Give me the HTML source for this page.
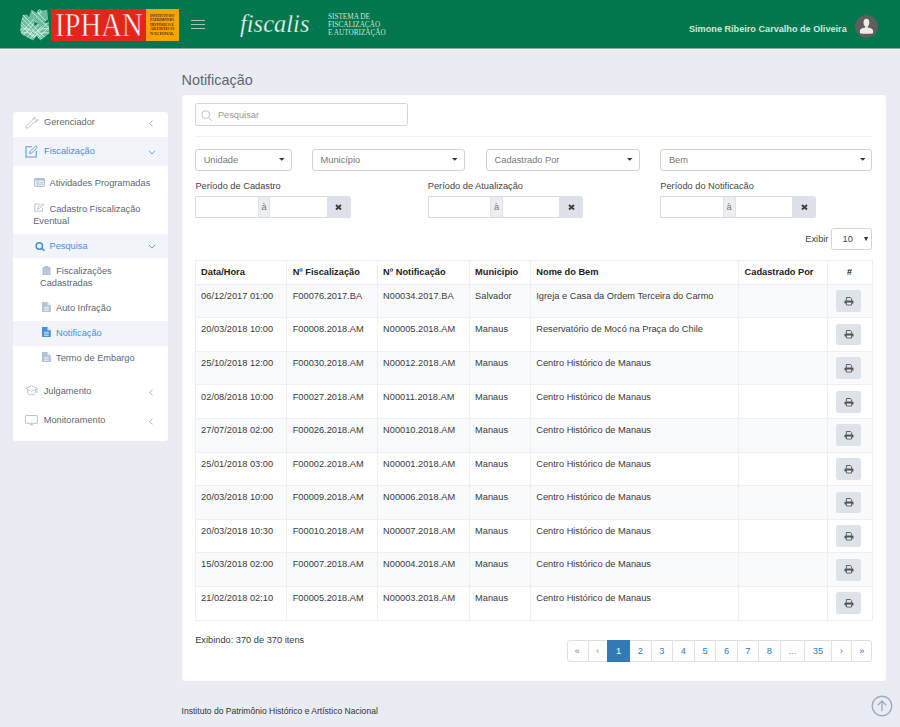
<!DOCTYPE html>
<html><head><meta charset="utf-8"><style>
*{margin:0;padding:0;box-sizing:border-box}
html,body{width:900px;height:727px;overflow:hidden;background:#e9ecf3;font-family:"Liberation Sans",sans-serif;font-size:9.25px;color:#3a3a3a}
.t{position:absolute;white-space:nowrap;line-height:12px}
.b{position:absolute}
.hdr{position:absolute;left:0;top:0;width:900px;height:48px;background:#02764c}
.sb{color:#5c6873}
.sba{color:#4c8fd6}
.th{font-weight:bold;color:#222}
.ph{color:#999}
.pg{color:#337ab7;text-align:center}
</style></head><body>
<div class="hdr"></div>
<div class="b" style="left:0.00px;top:48.00px;width:900.00px;height:1.00px;background:#7fb39c"></div>
<div class="b" style="left:0.00px;top:49.00px;width:900.00px;height:1.00px;background:#f1f2f8"></div>
<div class="b" style="left:50.70px;top:8.50px;width:94.90px;height:32.10px;background:#e3261b"></div>
<div class="b" style="left:145.60px;top:8.50px;width:33.00px;height:32.10px;background:#f7a400"></div>
<div class="t" style="left:55px;top:7px;font-family:'Liberation Serif',serif;font-size:33px;line-height:36px;color:#fff;-webkit-text-stroke:0.55px #e3261b;transform:scaleX(0.87);transform-origin:0 0">IPHAN</div>
<div class="t" style="left:150px;top:12.60px;font-family:'Liberation Serif',serif;font-size:4.3px;line-height:5px;color:#4a3008;font-weight:bold;letter-spacing:-0.05px;transform:scaleX(0.78);transform-origin:0 0">INSTITUTO DO</div>
<div class="t" style="left:150px;top:17.10px;font-family:'Liberation Serif',serif;font-size:4.3px;line-height:5px;color:#4a3008;font-weight:bold;letter-spacing:-0.05px;transform:scaleX(0.86);transform-origin:0 0">PATRIMÔNIO</div>
<div class="t" style="left:150px;top:21.60px;font-family:'Liberation Serif',serif;font-size:4.3px;line-height:5px;color:#4a3008;font-weight:bold;letter-spacing:-0.05px;transform:scaleX(0.85);transform-origin:0 0">HISTÓRICO E</div>
<div class="t" style="left:150px;top:26.10px;font-family:'Liberation Serif',serif;font-size:4.3px;line-height:5px;color:#4a3008;font-weight:bold;letter-spacing:-0.05px;transform:scaleX(1.02);transform-origin:0 0">ARTÍSTICO</div>
<div class="t" style="left:150px;top:30.60px;font-family:'Liberation Serif',serif;font-size:4.3px;line-height:5px;color:#4a3008;font-weight:bold;letter-spacing:-0.05px;transform:scaleX(1.04);transform-origin:0 0">NACIONAL</div>
<svg class="b" style="left:20px;top:9px" width="31" height="33" viewBox="0 0 31 33">
<defs><clipPath id="em"><path d="M11.5 0.5 L17 4 L19 2 L27.2 0.8 L29.5 24 L26 27 L20.3 31.6 L16.3 26.7 L13 31.5 L2 25.5 L0.2 22 L1 13 L3 6 L7 5.5 L9 8 Z"/></clipPath></defs>
<g clip-path="url(#em)">
<rect x="0" y="0" width="31" height="33" fill="#8fd3bb" opacity="0.75"/>
<g stroke="#e2f8ef" stroke-width="0.75" fill="none">
<path d="M-2 10 L20 33 M-2 13 L18 33 M0 7 L24 32 M2 5 L27 31"/>
<path d="M0 30 L16 12 M-2 27 L14 10 M3 33 L19 15 M7 33 L22 17"/>
<path d="M14 28 L31 10 M17 30 L31 16 M12 3 L31 21 M15 1 L31 17"/>
<path d="M-1 21 Q8 17 15 24 Q22 17 31 21"/>
<path d="M-1 25 Q8 21 15 28 Q22 21 31 25"/>
</g>
</g>
<circle cx="19.5" cy="2.6" r="1.7" fill="none" stroke="#e6fbf3" stroke-width="0.8"/>
<path d="M14.3 12.8 L17.8 14.8 L14.3 16.8 Z" fill="#02764c"/>
<path d="M23.7 13.3 L28.2 10.4 L28.2 13.8 Z" fill="#02764c"/>
</svg>
<div class="b" style="left:191.00px;top:19.60px;width:13.50px;height:1.10px;background:#9fc8b5"></div>
<div class="b" style="left:191.00px;top:23.90px;width:13.50px;height:1.10px;background:#9fc8b5"></div>
<div class="b" style="left:191.00px;top:28.10px;width:13.50px;height:1.10px;background:#9fc8b5"></div>
<div class="t" style="left:240px;top:8px;font-family:'Liberation Serif',serif;font-style:italic;font-size:24.5px;line-height:32px;color:#eef3ef;-webkit-text-stroke:0.25px #02764c">fiscalis</div>
<div class="t" style="left:328px;top:11.80px;font-family:'Liberation Serif',serif;font-size:7.6px;line-height:9px;color:#cfe2d8;transform:scaleX(0.95);transform-origin:0 0">SISTEMA DE</div>
<div class="t" style="left:328px;top:20.00px;font-family:'Liberation Serif',serif;font-size:7.6px;line-height:9px;color:#cfe2d8;transform:scaleX(0.95);transform-origin:0 0">FISCALIZAÇÃO</div>
<div class="t" style="left:328px;top:28.20px;font-family:'Liberation Serif',serif;font-size:7.6px;line-height:9px;color:#cfe2d8;transform:scaleX(0.95);transform-origin:0 0">E AUTORIZAÇÃO</div>
<div class="t" style="left:689px;top:22.94px;font-weight:bold;color:#d2e6dc;font-size:9.15px">Simone Ribeiro Carvalho de Oliveira</div>
<svg class="b" style="left:855px;top:15.2px" width="23" height="23" viewBox="0 0 23 23">
<circle cx="11.5" cy="11.5" r="11.4" fill="#5e5e5e"/>
<ellipse cx="11.4" cy="7.6" rx="2.9" ry="3.9" fill="#eeebe7"/><path d="M10.2 10.5 L10.2 12.4 C7.5 12.9 5 13.6 4.9 16 L5 18.2 C8 18.9 15 18.9 18 18.2 L18.1 16 C18 13.6 15.5 12.9 12.8 12.4 L12.8 10.5 Z" fill="#eeebe7"/>
</svg>
<div class="t" style="left:181.5px;top:71.54px;font-size:14.4px;line-height:17px;color:#5d6873">Notificação</div>
<div class="b" style="left:13.00px;top:112.00px;width:155.00px;height:328.50px;background:#fff;border-radius:3px"></div>
<div class="b" style="left:13.00px;top:137.00px;width:155.00px;height:29.00px;background:#f1f5fa"></div>
<div class="b" style="left:13.00px;top:233.60px;width:155.00px;height:24.00px;background:#f1f5fa"></div>
<div class="b" style="left:13.00px;top:321.00px;width:155.00px;height:25.00px;background:#f1f5fa"></div>
<div class="t sb" style="left:44.00px;top:116.34px;">Gerenciador</div>
<div class="t sba" style="left:44.00px;top:145.44px;">Fiscalização</div>
<div class="t sb" style="left:49.50px;top:176.94px;">Atividades Programadas</div>
<div class="t sb" style="left:49.50px;top:202.64px;">Cadastro Fiscalização</div>
<div class="t sb" style="left:33.20px;top:214.74px;">Eventual</div>
<div class="t sba" style="left:49.50px;top:239.94px;">Pesquisa</div>
<div class="t sb" style="left:56.20px;top:264.84px;">Fiscalizações</div>
<div class="t sb" style="left:40.00px;top:276.94px;">Cadastradas</div>
<div class="t sb" style="left:56.00px;top:302.24px;">Auto Infração</div>
<div class="t sba" style="left:56.00px;top:327.44px;">Notificação</div>
<div class="t sb" style="left:56.00px;top:352.44px;">Termo de Embargo</div>
<div class="t sb" style="left:43.70px;top:384.84px;">Julgamento</div>
<div class="t sb" style="left:43.70px;top:414.24px;">Monitoramento</div>
<svg class="b" style="left:147.5px;top:120px" width="6" height="7" viewBox="0 0 6 7"><path d="M4.5 0.8 L1.5 3.5 L4.5 6.2" stroke="#aab4be" stroke-width="1" fill="none"/></svg>
<svg class="b" style="left:147.5px;top:150px" width="8" height="5" viewBox="0 0 8 5"><path d="M0.8 0.8 L4 4 L7.2 0.8" stroke="#6a9fd8" stroke-width="1" fill="none"/></svg>
<svg class="b" style="left:147.5px;top:243.5px" width="8" height="5" viewBox="0 0 8 5"><path d="M0.8 0.8 L4 4 L7.2 0.8" stroke="#6a9fd8" stroke-width="1" fill="none"/></svg>
<svg class="b" style="left:147.5px;top:388.5px" width="6" height="7" viewBox="0 0 6 7"><path d="M4.5 0.8 L1.5 3.5 L4.5 6.2" stroke="#aab4be" stroke-width="1" fill="none"/></svg>
<svg class="b" style="left:147.5px;top:417.5px" width="6" height="7" viewBox="0 0 6 7"><path d="M4.5 0.8 L1.5 3.5 L4.5 6.2" stroke="#aab4be" stroke-width="1" fill="none"/></svg>
<svg class="b" style="left:24.5px;top:117px" width="14" height="12" viewBox="0 0 14 12"><path d="M1.2 9.1 L7.5 3.2 A2.9 2.9 0 0 1 10.3 0.4 L9.6 2.3 L11.3 3.6 L13.1 2.4 A2.9 2.9 0 0 1 9.3 5 L3 10.9 A1.25 1.25 0 0 1 1.2 9.1 Z" stroke="#b0c2d3" stroke-width="0.9" fill="none" stroke-linejoin="round"/></svg>
<svg class="b" style="left:24.5px;top:144.5px" width="13" height="13" viewBox="0 0 13 13"><path d="M7 1.7 L1 1.7 L1 12 L11.3 12 L11.3 6" stroke="#5a9ad9" stroke-width="1.05" fill="none"/><path d="M4.6 8.4 L5.1 6.4 L10.8 0.7 L12.4 2.3 L6.6 8 Z" stroke="#5a9ad9" stroke-width="0.95" fill="none"/></svg>
<svg class="b" style="left:34px;top:177.5px" width="11" height="9" viewBox="0 0 11 9"><rect x="0.5" y="0.5" width="10" height="8" rx="0.8" fill="#e6edf3" stroke="#b0c2d3" stroke-width="1"/><rect x="0.5" y="0.5" width="10" height="2" fill="#b0c2d3"/><path d="M3.3 3 V7.5 M3.8 4.6 H9.5 M3.8 6.3 H9.5" stroke="#b0c2d3" stroke-width="0.7"/></svg>
<svg class="b" style="left:34px;top:203px" width="11" height="9" viewBox="0 0 11 9"><path d="M6 1 L0.8 1 L0.8 8.2 L8.5 8.2 L8.5 5" stroke="#b0c2d3" stroke-width="0.9" fill="none"/><path d="M3.5 6 L4 4.3 L8.8 0.5 L10 1.7 L5.3 5.5 Z" stroke="#b0c2d3" stroke-width="0.9" fill="none"/></svg>
<svg class="b" style="left:34.5px;top:241.5px" width="11" height="9" viewBox="0 0 11 9"><circle cx="4.3" cy="4" r="3.2" stroke="#4a8fd6" stroke-width="1.5" fill="none"/><path d="M6.6 6.3 L9.5 8.8" stroke="#4a8fd6" stroke-width="1.7"/></svg>
<svg class="b" style="left:42px;top:265.5px" width="9" height="9" viewBox="0 0 9 9"><rect x="0.5" y="1.2" width="8" height="7.8" fill="#b0c2d3"/><rect x="2.5" y="0" width="4" height="2" fill="#b0c2d3"/><path d="M3 3 V8 M6 3 V8" stroke="#dfe6ed" stroke-width="0.6"/></svg>
<svg class="b" style="left:41.7px;top:302.4px" width="9" height="10" viewBox="0 0 9 10"><path d="M0 0 H5.5 L8.8 3.3 V10 H0 Z" fill="#b0c2d3"/><path d="M5.5 0 V3.3 H8.8" fill="#e9eef3"/><path d="M2 5.2 H6.8 M2 6.8 H6.8 M2 8.4 H6.8" stroke="#fff" stroke-width="0.7"/></svg>
<svg class="b" style="left:41.7px;top:327.3px" width="9" height="10" viewBox="0 0 9 10"><path d="M0 0 H5.5 L8.8 3.3 V10 H0 Z" fill="#4a8fd6"/><path d="M5.5 0 V3.3 H8.8" fill="#e9eef3"/><path d="M2 5.2 H6.8 M2 6.8 H6.8 M2 8.4 H6.8" stroke="#fff" stroke-width="0.7"/></svg>
<svg class="b" style="left:41.7px;top:352.3px" width="9" height="10" viewBox="0 0 9 10"><path d="M0 0 H5.5 L8.8 3.3 V10 H0 Z" fill="#b0c2d3"/><path d="M5.5 0 V3.3 H8.8" fill="#e9eef3"/><path d="M2 5.2 H6.8 M2 6.8 H6.8 M2 8.4 H6.8" stroke="#fff" stroke-width="0.7"/></svg>
<svg class="b" style="left:24.5px;top:384.5px" width="14" height="11" viewBox="0 0 14 11"><path d="M6.5 0.6 L12.6 3.4 L6.5 6.2 L0.4 3.4 Z" stroke="#b0c2d3" stroke-width="0.9" fill="none" stroke-linejoin="round"/><path d="M2.6 4.5 V8.3 C4 10.3 9 10.3 10.4 8.3 V4.5" stroke="#b0c2d3" stroke-width="0.9" fill="none"/><path d="M12 3.8 V8" stroke="#b0c2d3" stroke-width="0.9"/></svg>
<svg class="b" style="left:24.8px;top:414.5px" width="14" height="11" viewBox="0 0 14 11"><rect x="0.5" y="0.5" width="12" height="7.8" rx="0.6" stroke="#b0c2d3" stroke-width="0.95" fill="none"/><path d="M4.8 9.8 H8.2 M6.5 8.3 V9.8" stroke="#b0c2d3" stroke-width="0.9"/></svg>
<div class="b" style="left:182.00px;top:95.00px;width:704.00px;height:586.00px;background:#fff;border-radius:3px"></div>
<div class="b" style="left:195.20px;top:103.20px;width:212.80px;height:22.60px;border:1px solid #cfd6e1;border-radius:2.5px;background:#fff"></div>
<svg class="b" style="left:201px;top:109.5px" width="12" height="12" viewBox="0 0 12 12"><circle cx="4.7" cy="4.7" r="3.9" stroke="#b5b9c2" stroke-width="0.9" fill="none"/><path d="M7.6 7.6 L10.8 10.8" stroke="#b5b9c2" stroke-width="1"/></svg>
<div class="t ph" style="left:217.90px;top:108.94px;">Pesquisar</div>
<div class="b" style="left:195.00px;top:135.50px;width:677.50px;height:1.00px;background:#eff1f5"></div>
<div class="b" style="left:195.10px;top:148.50px;width:96.80px;height:22.10px;border:1px solid #d2d2d2;border-radius:3px;background:#fff"></div>
<div class="t " style="left:203.70px;top:153.94px;color:#777">Unidade</div>
<svg class="b" style="left:278.9px;top:158px" width="6" height="3" viewBox="0 0 6 3"><path d="M0 0 H5.5 L2.75 2.8Z" fill="#333"/></svg>
<div class="b" style="left:312.00px;top:148.50px;width:153.30px;height:22.10px;border:1px solid #d2d2d2;border-radius:3px;background:#fff"></div>
<div class="t " style="left:320.60px;top:153.94px;color:#777">Município</div>
<svg class="b" style="left:452.3px;top:158px" width="6" height="3" viewBox="0 0 6 3"><path d="M0 0 H5.5 L2.75 2.8Z" fill="#333"/></svg>
<div class="b" style="left:486.00px;top:148.50px;width:154.00px;height:22.10px;border:1px solid #d2d2d2;border-radius:3px;background:#fff"></div>
<div class="t " style="left:494.60px;top:153.94px;color:#777">Cadastrado Por</div>
<svg class="b" style="left:627px;top:158px" width="6" height="3" viewBox="0 0 6 3"><path d="M0 0 H5.5 L2.75 2.8Z" fill="#333"/></svg>
<div class="b" style="left:660.30px;top:148.50px;width:212.20px;height:22.10px;border:1px solid #d2d2d2;border-radius:3px;background:#fff"></div>
<div class="t " style="left:668.90px;top:153.94px;color:#777">Bem</div>
<svg class="b" style="left:859.5px;top:158px" width="6" height="3" viewBox="0 0 6 3"><path d="M0 0 H5.5 L2.75 2.8Z" fill="#333"/></svg>
<div class="t " style="left:195.40px;top:179.94px;color:#444">Período de Cadastro</div>
<div class="t " style="left:427.80px;top:179.94px;color:#444">Período de Atualização</div>
<div class="t " style="left:660.30px;top:179.94px;color:#444">Período do Notificacão</div>
<div class="b" style="left:195.10px;top:195.50px;width:132.20px;height:22.30px;border:1px solid #d3dae4;border-right:none;background:#fff;border-radius:2px 0 0 2px"></div>
<div class="b" style="left:257.70px;top:195.50px;width:12.80px;height:22.30px;border:1px solid #d3dae4;border-left:1px solid #dfe3ea;border-right:1px solid #dfe3ea;background:#eceef1"></div>
<div class="t" style="left:257.70px;width:12.8px;text-align:center;top:201.14px;color:#777">à</div>
<div class="b" style="left:327.00px;top:195.50px;width:23.80px;height:22.30px;background:#dde2ea;border-radius:0 2.5px 2.5px 0"></div>
<svg class="b" style="left:335.40px;top:204px" width="7" height="6.5" viewBox="0 0 7 6.5"><path d="M1 1 L6 5.5 M6 1 L1 5.5" stroke="#3d3d3d" stroke-width="1.9"/></svg>
<div class="b" style="left:427.50px;top:195.50px;width:132.20px;height:22.30px;border:1px solid #d3dae4;border-right:none;background:#fff;border-radius:2px 0 0 2px"></div>
<div class="b" style="left:490.10px;top:195.50px;width:12.80px;height:22.30px;border:1px solid #d3dae4;border-left:1px solid #dfe3ea;border-right:1px solid #dfe3ea;background:#eceef1"></div>
<div class="t" style="left:490.10px;width:12.8px;text-align:center;top:201.14px;color:#777">à</div>
<div class="b" style="left:559.40px;top:195.50px;width:23.80px;height:22.30px;background:#dde2ea;border-radius:0 2.5px 2.5px 0"></div>
<svg class="b" style="left:567.80px;top:204px" width="7" height="6.5" viewBox="0 0 7 6.5"><path d="M1 1 L6 5.5 M6 1 L1 5.5" stroke="#3d3d3d" stroke-width="1.9"/></svg>
<div class="b" style="left:660.20px;top:195.50px;width:132.20px;height:22.30px;border:1px solid #d3dae4;border-right:none;background:#fff;border-radius:2px 0 0 2px"></div>
<div class="b" style="left:722.80px;top:195.50px;width:12.80px;height:22.30px;border:1px solid #d3dae4;border-left:1px solid #dfe3ea;border-right:1px solid #dfe3ea;background:#eceef1"></div>
<div class="t" style="left:722.80px;width:12.8px;text-align:center;top:201.14px;color:#777">à</div>
<div class="b" style="left:792.10px;top:195.50px;width:23.80px;height:22.30px;background:#dde2ea;border-radius:0 2.5px 2.5px 0"></div>
<svg class="b" style="left:800.50px;top:204px" width="7" height="6.5" viewBox="0 0 7 6.5"><path d="M1 1 L6 5.5 M6 1 L1 5.5" stroke="#3d3d3d" stroke-width="1.9"/></svg>
<div class="t " style="left:805.30px;top:232.84px;color:#444">Exibir</div>
<div class="b" style="left:831.30px;top:228.20px;width:41.20px;height:21.40px;border:1px solid #cfd6e1;border-radius:2.5px;background:#fff"></div>
<div class="t " style="left:842.60px;top:232.84px;color:#444">10</div>
<svg class="b" style="left:864.4px;top:236.6px" width="4.5" height="4.5" viewBox="0 0 4.5 4.5"><path d="M0 0 H4.2 L2.1 4.2Z" fill="#333"/></svg>
<div class="b" style="left:195.20px;top:284.20px;width:677.40px;height:33.58px;background:#f9fafc"></div>
<div class="b" style="left:195.20px;top:351.36px;width:677.40px;height:33.58px;background:#f9fafc"></div>
<div class="b" style="left:195.20px;top:418.52px;width:677.40px;height:33.58px;background:#f9fafc"></div>
<div class="b" style="left:195.20px;top:485.68px;width:677.40px;height:33.58px;background:#f9fafc"></div>
<div class="b" style="left:195.20px;top:552.84px;width:677.40px;height:33.58px;background:#f9fafc"></div>
<div class="b" style="left:195.20px;top:260.00px;width:677.40px;height:1.00px;background:#eceff3"></div>
<div class="b" style="left:195.20px;top:283.70px;width:677.40px;height:1.00px;background:#eceff3"></div>
<div class="b" style="left:195.20px;top:317.28px;width:677.40px;height:1.00px;background:#eceff3"></div>
<div class="b" style="left:195.20px;top:350.86px;width:677.40px;height:1.00px;background:#eceff3"></div>
<div class="b" style="left:195.20px;top:384.44px;width:677.40px;height:1.00px;background:#eceff3"></div>
<div class="b" style="left:195.20px;top:418.02px;width:677.40px;height:1.00px;background:#eceff3"></div>
<div class="b" style="left:195.20px;top:451.60px;width:677.40px;height:1.00px;background:#eceff3"></div>
<div class="b" style="left:195.20px;top:485.18px;width:677.40px;height:1.00px;background:#eceff3"></div>
<div class="b" style="left:195.20px;top:518.76px;width:677.40px;height:1.00px;background:#eceff3"></div>
<div class="b" style="left:195.20px;top:552.34px;width:677.40px;height:1.00px;background:#eceff3"></div>
<div class="b" style="left:195.20px;top:585.92px;width:677.40px;height:1.00px;background:#eceff3"></div>
<div class="b" style="left:195.20px;top:619.50px;width:677.40px;height:1.00px;background:#eceff3"></div>
<div class="b" style="left:194.70px;top:260.50px;width:1.00px;height:359.50px;background:#eceff3"></div>
<div class="b" style="left:286.30px;top:260.50px;width:1.00px;height:359.50px;background:#eceff3"></div>
<div class="b" style="left:376.70px;top:260.50px;width:1.00px;height:359.50px;background:#eceff3"></div>
<div class="b" style="left:468.70px;top:260.50px;width:1.00px;height:359.50px;background:#eceff3"></div>
<div class="b" style="left:529.90px;top:260.50px;width:1.00px;height:359.50px;background:#eceff3"></div>
<div class="b" style="left:738.20px;top:260.50px;width:1.00px;height:359.50px;background:#eceff3"></div>
<div class="b" style="left:827.10px;top:260.50px;width:1.00px;height:359.50px;background:#eceff3"></div>
<div class="b" style="left:872.10px;top:260.50px;width:1.00px;height:359.50px;background:#eceff3"></div>
<div class="t th" style="left:201.10px;top:265.74px;">Data/Hora</div>
<div class="t th" style="left:292.70px;top:265.74px;">Nº Fiscalização</div>
<div class="t th" style="left:383.10px;top:265.74px;">Nº Notificação</div>
<div class="t th" style="left:475.10px;top:265.74px;">Municipio</div>
<div class="t th" style="left:536.30px;top:265.74px;">Nome do Bem</div>
<div class="t th" style="left:744.60px;top:265.74px;">Cadastrado Por</div>
<div class="t th" style="left:846.80px;top:265.74px;font-style:italic">#</div>
<div class="t " style="left:201.10px;top:289.84px;">06/12/2017 01:00</div>
<div class="t " style="left:292.70px;top:289.84px;">F00076.2017.BA</div>
<div class="t " style="left:383.10px;top:289.84px;">N00034.2017.BA</div>
<div class="t " style="left:475.10px;top:289.84px;">Salvador</div>
<div class="t " style="left:536.30px;top:289.84px;">Igreja e Casa da Ordem Terceira do Carmo</div>
<div class="b" style="left:836.20px;top:290.10px;width:25.30px;height:21.80px;background:#dee3ea;border-radius:2.5px"></div>
<svg class="b" style="left:844px;top:296.80px" width="10" height="9" viewBox="0 0 10 9"><path d="M2.4 3.6 V0.5 H6.4 L7.6 1.7 V3.6" stroke="#444" stroke-width="0.8" fill="none"/><rect x="0.5" y="3.6" width="9" height="3" rx="0.9" fill="#555"/><path d="M2.4 5.6 V8 H7.6 V5.6" stroke="#444" stroke-width="0.8" fill="#eef0f3"/></svg>
<div class="t " style="left:201.10px;top:323.42px;">20/03/2018 10:00</div>
<div class="t " style="left:292.70px;top:323.42px;">F00008.2018.AM</div>
<div class="t " style="left:383.10px;top:323.42px;">N00005.2018.AM</div>
<div class="t " style="left:475.10px;top:323.42px;">Manaus</div>
<div class="t " style="left:536.30px;top:323.42px;">Reservatório de Mocó na Praça do Chile</div>
<div class="b" style="left:836.20px;top:323.68px;width:25.30px;height:21.80px;background:#dee3ea;border-radius:2.5px"></div>
<svg class="b" style="left:844px;top:330.38px" width="10" height="9" viewBox="0 0 10 9"><path d="M2.4 3.6 V0.5 H6.4 L7.6 1.7 V3.6" stroke="#444" stroke-width="0.8" fill="none"/><rect x="0.5" y="3.6" width="9" height="3" rx="0.9" fill="#555"/><path d="M2.4 5.6 V8 H7.6 V5.6" stroke="#444" stroke-width="0.8" fill="#eef0f3"/></svg>
<div class="t " style="left:201.10px;top:357.00px;">25/10/2018 12:00</div>
<div class="t " style="left:292.70px;top:357.00px;">F00030.2018.AM</div>
<div class="t " style="left:383.10px;top:357.00px;">N00012.2018.AM</div>
<div class="t " style="left:475.10px;top:357.00px;">Manaus</div>
<div class="t " style="left:536.30px;top:357.00px;">Centro Histórico de Manaus</div>
<div class="b" style="left:836.20px;top:357.26px;width:25.30px;height:21.80px;background:#dee3ea;border-radius:2.5px"></div>
<svg class="b" style="left:844px;top:363.96px" width="10" height="9" viewBox="0 0 10 9"><path d="M2.4 3.6 V0.5 H6.4 L7.6 1.7 V3.6" stroke="#444" stroke-width="0.8" fill="none"/><rect x="0.5" y="3.6" width="9" height="3" rx="0.9" fill="#555"/><path d="M2.4 5.6 V8 H7.6 V5.6" stroke="#444" stroke-width="0.8" fill="#eef0f3"/></svg>
<div class="t " style="left:201.10px;top:390.58px;">02/08/2018 10:00</div>
<div class="t " style="left:292.70px;top:390.58px;">F00027.2018.AM</div>
<div class="t " style="left:383.10px;top:390.58px;">N00011.2018.AM</div>
<div class="t " style="left:475.10px;top:390.58px;">Manaus</div>
<div class="t " style="left:536.30px;top:390.58px;">Centro Histórico de Manaus</div>
<div class="b" style="left:836.20px;top:390.84px;width:25.30px;height:21.80px;background:#dee3ea;border-radius:2.5px"></div>
<svg class="b" style="left:844px;top:397.54px" width="10" height="9" viewBox="0 0 10 9"><path d="M2.4 3.6 V0.5 H6.4 L7.6 1.7 V3.6" stroke="#444" stroke-width="0.8" fill="none"/><rect x="0.5" y="3.6" width="9" height="3" rx="0.9" fill="#555"/><path d="M2.4 5.6 V8 H7.6 V5.6" stroke="#444" stroke-width="0.8" fill="#eef0f3"/></svg>
<div class="t " style="left:201.10px;top:424.16px;">27/07/2018 02:00</div>
<div class="t " style="left:292.70px;top:424.16px;">F00026.2018.AM</div>
<div class="t " style="left:383.10px;top:424.16px;">N00010.2018.AM</div>
<div class="t " style="left:475.10px;top:424.16px;">Manaus</div>
<div class="t " style="left:536.30px;top:424.16px;">Centro Histórico de Manaus</div>
<div class="b" style="left:836.20px;top:424.42px;width:25.30px;height:21.80px;background:#dee3ea;border-radius:2.5px"></div>
<svg class="b" style="left:844px;top:431.12px" width="10" height="9" viewBox="0 0 10 9"><path d="M2.4 3.6 V0.5 H6.4 L7.6 1.7 V3.6" stroke="#444" stroke-width="0.8" fill="none"/><rect x="0.5" y="3.6" width="9" height="3" rx="0.9" fill="#555"/><path d="M2.4 5.6 V8 H7.6 V5.6" stroke="#444" stroke-width="0.8" fill="#eef0f3"/></svg>
<div class="t " style="left:201.10px;top:457.74px;">25/01/2018 03:00</div>
<div class="t " style="left:292.70px;top:457.74px;">F00002.2018.AM</div>
<div class="t " style="left:383.10px;top:457.74px;">N00001.2018.AM</div>
<div class="t " style="left:475.10px;top:457.74px;">Manaus</div>
<div class="t " style="left:536.30px;top:457.74px;">Centro Histórico de Manaus</div>
<div class="b" style="left:836.20px;top:458.00px;width:25.30px;height:21.80px;background:#dee3ea;border-radius:2.5px"></div>
<svg class="b" style="left:844px;top:464.70px" width="10" height="9" viewBox="0 0 10 9"><path d="M2.4 3.6 V0.5 H6.4 L7.6 1.7 V3.6" stroke="#444" stroke-width="0.8" fill="none"/><rect x="0.5" y="3.6" width="9" height="3" rx="0.9" fill="#555"/><path d="M2.4 5.6 V8 H7.6 V5.6" stroke="#444" stroke-width="0.8" fill="#eef0f3"/></svg>
<div class="t " style="left:201.10px;top:491.32px;">20/03/2018 10:00</div>
<div class="t " style="left:292.70px;top:491.32px;">F00009.2018.AM</div>
<div class="t " style="left:383.10px;top:491.32px;">N00006.2018.AM</div>
<div class="t " style="left:475.10px;top:491.32px;">Manaus</div>
<div class="t " style="left:536.30px;top:491.32px;">Centro Histórico de Manaus</div>
<div class="b" style="left:836.20px;top:491.58px;width:25.30px;height:21.80px;background:#dee3ea;border-radius:2.5px"></div>
<svg class="b" style="left:844px;top:498.28px" width="10" height="9" viewBox="0 0 10 9"><path d="M2.4 3.6 V0.5 H6.4 L7.6 1.7 V3.6" stroke="#444" stroke-width="0.8" fill="none"/><rect x="0.5" y="3.6" width="9" height="3" rx="0.9" fill="#555"/><path d="M2.4 5.6 V8 H7.6 V5.6" stroke="#444" stroke-width="0.8" fill="#eef0f3"/></svg>
<div class="t " style="left:201.10px;top:524.90px;">20/03/2018 10:30</div>
<div class="t " style="left:292.70px;top:524.90px;">F00010.2018.AM</div>
<div class="t " style="left:383.10px;top:524.90px;">N00007.2018.AM</div>
<div class="t " style="left:475.10px;top:524.90px;">Manaus</div>
<div class="t " style="left:536.30px;top:524.90px;">Centro Histórico de Manaus</div>
<div class="b" style="left:836.20px;top:525.16px;width:25.30px;height:21.80px;background:#dee3ea;border-radius:2.5px"></div>
<svg class="b" style="left:844px;top:531.86px" width="10" height="9" viewBox="0 0 10 9"><path d="M2.4 3.6 V0.5 H6.4 L7.6 1.7 V3.6" stroke="#444" stroke-width="0.8" fill="none"/><rect x="0.5" y="3.6" width="9" height="3" rx="0.9" fill="#555"/><path d="M2.4 5.6 V8 H7.6 V5.6" stroke="#444" stroke-width="0.8" fill="#eef0f3"/></svg>
<div class="t " style="left:201.10px;top:558.48px;">15/03/2018 02:00</div>
<div class="t " style="left:292.70px;top:558.48px;">F00007.2018.AM</div>
<div class="t " style="left:383.10px;top:558.48px;">N00004.2018.AM</div>
<div class="t " style="left:475.10px;top:558.48px;">Manaus</div>
<div class="t " style="left:536.30px;top:558.48px;">Centro Histórico de Manaus</div>
<div class="b" style="left:836.20px;top:558.74px;width:25.30px;height:21.80px;background:#dee3ea;border-radius:2.5px"></div>
<svg class="b" style="left:844px;top:565.44px" width="10" height="9" viewBox="0 0 10 9"><path d="M2.4 3.6 V0.5 H6.4 L7.6 1.7 V3.6" stroke="#444" stroke-width="0.8" fill="none"/><rect x="0.5" y="3.6" width="9" height="3" rx="0.9" fill="#555"/><path d="M2.4 5.6 V8 H7.6 V5.6" stroke="#444" stroke-width="0.8" fill="#eef0f3"/></svg>
<div class="t " style="left:201.10px;top:592.06px;">21/02/2018 02:10</div>
<div class="t " style="left:292.70px;top:592.06px;">F00005.2018.AM</div>
<div class="t " style="left:383.10px;top:592.06px;">N00003.2018.AM</div>
<div class="t " style="left:475.10px;top:592.06px;">Manaus</div>
<div class="t " style="left:536.30px;top:592.06px;">Centro Histórico de Manaus</div>
<div class="b" style="left:836.20px;top:592.32px;width:25.30px;height:21.80px;background:#dee3ea;border-radius:2.5px"></div>
<svg class="b" style="left:844px;top:599.02px" width="10" height="9" viewBox="0 0 10 9"><path d="M2.4 3.6 V0.5 H6.4 L7.6 1.7 V3.6" stroke="#444" stroke-width="0.8" fill="none"/><rect x="0.5" y="3.6" width="9" height="3" rx="0.9" fill="#555"/><path d="M2.4 5.6 V8 H7.6 V5.6" stroke="#444" stroke-width="0.8" fill="#eef0f3"/></svg>
<div class="t " style="left:195.20px;top:633.84px;">Exibindo: 370 de 370 itens</div>
<div class="b" style="left:566.50px;top:640.40px;width:305.90px;height:21.40px;border:1px solid #dde1e6;border-radius:3px;background:#fff"></div>
<div class="b" style="left:587.50px;top:640.40px;width:1.00px;height:21.40px;background:#dde1e6"></div>
<div class="b" style="left:606.80px;top:640.40px;width:1.00px;height:21.40px;background:#dde1e6"></div>
<div class="b" style="left:629.20px;top:640.40px;width:1.00px;height:21.40px;background:#dde1e6"></div>
<div class="b" style="left:650.60px;top:640.40px;width:1.00px;height:21.40px;background:#dde1e6"></div>
<div class="b" style="left:671.90px;top:640.40px;width:1.00px;height:21.40px;background:#dde1e6"></div>
<div class="b" style="left:693.80px;top:640.40px;width:1.00px;height:21.40px;background:#dde1e6"></div>
<div class="b" style="left:715.30px;top:640.40px;width:1.00px;height:21.40px;background:#dde1e6"></div>
<div class="b" style="left:736.70px;top:640.40px;width:1.00px;height:21.40px;background:#dde1e6"></div>
<div class="b" style="left:757.90px;top:640.40px;width:1.00px;height:21.40px;background:#dde1e6"></div>
<div class="b" style="left:779.90px;top:640.40px;width:1.00px;height:21.40px;background:#dde1e6"></div>
<div class="b" style="left:803.90px;top:640.40px;width:1.00px;height:21.40px;background:#dde1e6"></div>
<div class="b" style="left:831.10px;top:640.40px;width:1.00px;height:21.40px;background:#dde1e6"></div>
<div class="b" style="left:850.70px;top:640.40px;width:1.00px;height:21.40px;background:#dde1e6"></div>
<div class="b" style="left:606.80px;top:640.40px;width:23.40px;height:21.40px;background:#337ab7"></div>
<div class="t" style="left:566.50px;width:21.50px;text-align:center;top:645.14px;color:#80878f">«</div>
<div class="t" style="left:588.00px;width:19.30px;text-align:center;top:645.14px;color:#80878f">‹</div>
<div class="t" style="left:607.30px;width:22.40px;text-align:center;top:645.14px;color:#fff">1</div>
<div class="t" style="left:629.70px;width:21.40px;text-align:center;top:645.14px;color:#337ab7">2</div>
<div class="t" style="left:651.10px;width:21.30px;text-align:center;top:645.14px;color:#337ab7">3</div>
<div class="t" style="left:672.40px;width:21.90px;text-align:center;top:645.14px;color:#337ab7">4</div>
<div class="t" style="left:694.30px;width:21.50px;text-align:center;top:645.14px;color:#337ab7">5</div>
<div class="t" style="left:715.80px;width:21.40px;text-align:center;top:645.14px;color:#337ab7">6</div>
<div class="t" style="left:737.20px;width:21.20px;text-align:center;top:645.14px;color:#337ab7">7</div>
<div class="t" style="left:758.40px;width:22.00px;text-align:center;top:645.14px;color:#337ab7">8</div>
<div class="t" style="left:780.40px;width:24.00px;text-align:center;top:645.14px;color:#80878f">...</div>
<div class="t" style="left:804.40px;width:27.20px;text-align:center;top:645.14px;color:#337ab7">35</div>
<div class="t" style="left:831.60px;width:19.60px;text-align:center;top:645.14px;color:#337ab7">›</div>
<div class="t" style="left:851.20px;width:21.20px;text-align:center;top:645.14px;color:#337ab7">»</div>
<div class="t " style="left:181.60px;top:705.07px;font-size:8.55px;color:#333">Instituto do Patrimônio Histórico e Artístico Nacional</div>
<svg class="b" style="left:870.5px;top:695.4px" width="22" height="22" viewBox="0 0 22 22"><circle cx="11" cy="11" r="9.8" stroke="#9eabba" stroke-width="1.4" fill="none"/><path d="M11 16.3 V6 M6.8 10.2 L11 6 L15.2 10.2" stroke="#9eabba" stroke-width="1.3" fill="none"/></svg>
</body></html>
